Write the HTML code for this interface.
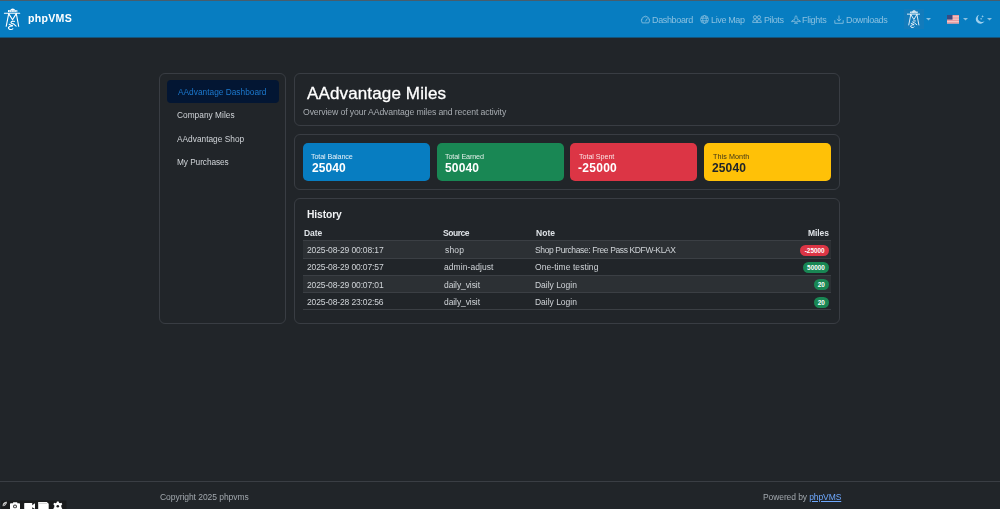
<!DOCTYPE html>
<html><head><meta charset="utf-8">
<style>
*{box-sizing:border-box;margin:0;padding:0}
html,body{width:1000px;height:509px;overflow:hidden;background:#212529;font-family:"Liberation Sans",sans-serif;color:#dee2e6}
.a{position:absolute;white-space:nowrap;line-height:1;will-change:transform}
.abs{position:absolute}
.card{position:absolute;border:1px solid #393d43;border-radius:6px}
.stat{position:absolute;top:143px;height:38px;width:127px;border-radius:5px}
.badge{position:absolute;height:11px;border-radius:6px;font-size:6.4px;font-weight:bold;color:#fff;line-height:11px;text-align:center;font-family:"Liberation Sans",sans-serif}
</style></head>
<body>
<div class="abs" style="left:0;top:0;width:1000px;height:1px;background:#475d6d"></div>
<div class="abs" style="left:0;top:1px;width:1000px;height:37px;background:#077dc1;border-bottom:1px solid #15547a"></div>
<!-- logo -->
<svg class="abs" style="left:0;top:0" width="24" height="34" viewBox="0 0 24 34" fill="none" stroke="#fff" stroke-width="1.1" stroke-linecap="round">
  <path d="M10.2 10.3 Q10.6 8.4 12.7 8.4 Q14.8 8.4 15.2 10.3 Z" fill="#fff" stroke="none"/>
  <rect x="8" y="10.1" width="9.3" height="2" fill="#fff" stroke="none"/>
  <path d="M9.7 10.8 V11.6 M11.4 10.8 V11.6 M13.1 10.8 V11.6 M14.8 10.8 V11.6 M16.4 10.8 V11.6" stroke="#077dc1" stroke-width="0.45"/>
  <path d="M4.4 13.2 H19.7"/>
  <path d="M8.7 13.6 L12.5 19.7 L16.3 13.6"/>
  <path d="M8.7 13.6 L6.2 26.3 M16.3 13.6 L18.7 26.3"/>
  <path d="M14.4 21.4 Q11.5 20.9 10.9 22.4 Q11 23.6 13.4 23.9 L16.1 26.1"/>
  <path d="M9.2 24.3 L12.8 25.9 Q9.6 26 8.5 27.4 Q8.3 29.2 10.3 29.5 Q12.3 29.7 12.8 28.7"/>
</svg>

<!-- nav icons -->
<svg class="abs" style="left:640px;top:15px" width="11" height="9" viewBox="0 0 11 9" fill="none" stroke="#8ac0e0" stroke-width="0.85">
  <path d="M2.2 7.9 A4.1 4.1 0 1 1 8.8 7.9 Z"/>
  <path d="M5.5 6.4 L7.4 3.4"/>
  <path d="M2.4 4.6 L3.1 4.9 M5.5 1.8 V2.5 M8.6 4.6 L7.9 4.9" stroke-width="0.6"/>
</svg>
<svg class="abs" style="left:700px;top:14.5px" width="9" height="9" viewBox="0 0 9 9" fill="none" stroke="#8ac0e0" stroke-width="0.8">
  <circle cx="4.5" cy="4.5" r="3.9"/>
  <ellipse cx="4.5" cy="4.5" rx="1.8" ry="3.9"/>
  <path d="M0.8 3.2 H8.2 M0.8 5.8 H8.2"/>
</svg>
<svg class="abs" style="left:752px;top:15px" width="10" height="8" viewBox="0 0 10 8" fill="none" stroke="#8ac0e0" stroke-width="0.85">
  <circle cx="3" cy="2.3" r="1.6"/><circle cx="7" cy="2.3" r="1.6"/>
  <path d="M0.6 7.4 Q0.6 4.6 3 4.6 Q5 4.6 5 7.4 Z M5 7.4 Q5 4.6 7 4.6 Q9.4 4.6 9.4 7.4 Z"/>
</svg>
<svg class="abs" style="left:791px;top:14.5px" width="10" height="9" viewBox="0 0 10 9" fill="none" stroke="#8ac0e0" stroke-width="0.8">
  <path d="M5 0.6 Q6 1 6 2.5 V4 L9.3 6 V6.8 L6 6 L5.6 7.6 L6.6 8.3 H3.4 L4.4 7.6 L4 6 L0.7 6.8 V6 L4 4 V2.5 Q4 1 5 0.6 Z"/>
</svg>
<svg class="abs" style="left:834px;top:14.5px" width="10" height="9" viewBox="0 0 10 9" fill="none" stroke="#8ac0e0" stroke-width="0.85">
  <path d="M5 0.5 V6 M2.8 4 L5 6.1 L7.2 4"/>
  <path d="M0.8 5.2 V8.3 H9.2 V5.2"/>
</svg>
<!-- right side -->
<div class="abs" style="left:904px;top:9px;width:19.5px;height:19.5px;background:#137bbb"></div>
<svg class="abs" style="left:907px;top:10px" width="13" height="18" viewBox="4 8.2 16.1 21.8" preserveAspectRatio="none" fill="none" stroke="#fff" stroke-width="1.05" stroke-linecap="round">
  <path d="M10.2 10.3 Q10.6 8.4 12.7 8.4 Q14.8 8.4 15.2 10.3 Z" fill="#fff" stroke="none"/>
  <rect x="8" y="10.1" width="9.3" height="2" fill="#fff" stroke="none"/>
  <path d="M9.7 10.8 V11.6 M11.4 10.8 V11.6 M13.1 10.8 V11.6 M14.8 10.8 V11.6 M16.4 10.8 V11.6" stroke="#137bbb" stroke-width="0.45"/>
  <path d="M4.4 13.2 H19.7"/>
  <path d="M8.7 13.6 L12.5 19.7 L16.3 13.6"/>
  <path d="M8.7 13.6 L6.2 26.3 M16.3 13.6 L18.7 26.3"/>
  <path d="M14.4 21.4 Q11.5 20.9 10.9 22.4 Q11 23.6 13.4 23.9 L16.1 26.1"/>
  <path d="M9.2 24.3 L12.8 25.9 Q9.6 26 8.5 27.4 Q8.3 29.2 10.3 29.5 Q12.3 29.7 12.8 28.7"/>
</svg>
<svg class="abs" style="left:925.5px;top:18px" width="5" height="3" viewBox="0 0 5 3"><path d="M0 0 H5 L2.5 2.6 Z" fill="#8ac0e0"/></svg>
<svg class="abs" style="left:947px;top:15px" width="12" height="8.5" viewBox="0 0 12 8.5">
  <rect width="12" height="8.5" fill="#f3c6c6"/>
  <rect y="0" width="12" height="1.2" fill="#e89a9f"/><rect y="2.4" width="12" height="1.2" fill="#e89a9f"/><rect y="4.8" width="12" height="1.2" fill="#e89a9f"/><rect y="7.2" width="12" height="1.3" fill="#e89a9f"/>
  <rect width="5.5" height="4.6" fill="#3a4a80"/>
</svg>
<svg class="abs" style="left:962.5px;top:18px" width="5" height="3" viewBox="0 0 5 3"><path d="M0 0 H5 L2.5 2.6 Z" fill="#8ac0e0"/></svg>
<svg class="abs" style="left:974.5px;top:14px" width="11" height="10" viewBox="0 0 11 10">
  <path d="M4.3 0.7 A4.6 4.6 0 1 0 9.6 7.1 A3.6 3.6 0 0 1 4.3 0.7 Z" fill="#9fd0ee"/>
  <path d="M7.6 0.9 l0.4 1 l1 0.4 l-1 0.4 l-0.4 1 l-0.4 -1 l-1 -0.4 l1 -0.4 Z" fill="#9fd0ee"/>
  <path d="M6.1 3.7 l0.35 0.8 l0.8 0.35 l-0.8 0.35 l-0.35 0.8 l-0.35 -0.8 l-0.8 -0.35 l0.8 -0.35 Z" fill="#9fd0ee"/>
</svg>
<svg class="abs" style="left:986.5px;top:18px" width="5" height="3" viewBox="0 0 5 3"><path d="M0 0 H5 L2.5 2.6 Z" fill="#8ac0e0"/></svg>


<!-- sidebar -->
<div class="card" style="left:159px;top:73px;width:127px;height:251px"></div>
<div class="abs" style="left:166.5px;top:80px;width:112.5px;height:23px;background:#031633;border-radius:4px"></div>
<!-- header card -->
<div class="card" style="left:294px;top:73px;width:546px;height:53px"></div>
<!-- stats card -->
<div class="card" style="left:294px;top:134px;width:546px;height:56px"></div>
<div class="stat" style="left:303px;background:#077dc1"></div>
<div class="stat" style="left:437px;background:#198754"></div>
<div class="stat" style="left:570px;background:#dc3545"></div>
<div class="stat" style="left:704px;background:#ffc107"></div>
<!-- history card -->
<div class="card" style="left:294px;top:198px;width:546px;height:126px"></div>
<div class="abs" style="left:303px;top:240px;width:528px;height:1px;background:#3b3f44"></div>
<div class="abs" style="left:303px;top:241px;width:528px;height:17px;background:#2c3034"></div>
<div class="abs" style="left:303px;top:258px;width:528px;height:1px;background:#3b3f44"></div>
<div class="abs" style="left:303px;top:275px;width:528px;height:1px;background:#3b3f44"></div>
<div class="abs" style="left:303px;top:276px;width:528px;height:16px;background:#2c3034"></div>
<div class="abs" style="left:303px;top:292px;width:528px;height:1px;background:#3b3f44"></div>
<div class="abs" style="left:303px;top:309px;width:528px;height:1px;background:#3b3f44"></div>
<div class="badge" style="left:800.3px;top:244.8px;width:28.8px;background:#dc3545">-25000</div>
<div class="badge" style="left:802.9px;top:262px;width:26.2px;background:#198754">50000</div>
<div class="badge" style="left:813.5px;top:279.2px;width:15.6px;background:#198754">20</div>
<div class="badge" style="left:813.5px;top:296.7px;width:15.6px;background:#198754">20</div>
<!-- footer -->
<div class="abs" style="left:0;top:481px;width:1000px;height:1px;background:#3a3e44"></div>
<!-- tray -->
<svg class="abs" style="left:0;top:496px" width="70" height="13" viewBox="0 496 70 13">
  <rect x="1.3" y="500.6" width="65.1" height="9" fill="#1a1b1c"/>
  <path d="M2.6 506.3 Q2.4 503 5 502 Q6.6 501.4 7 501.8 Q7.2 503.6 5.4 505.2 Q4 506.4 2.6 506.3 Z" fill="#c8c8c8"/>
  <path d="M3.4 505.4 L5.6 503.6" stroke="#1a1b1c" stroke-width="0.5"/>
  <rect x="10" y="503.3" width="10" height="6" rx="0.8" fill="#fff"/>
  <rect x="13" y="502.3" width="4.4" height="1.6" rx="0.4" fill="#fff"/>
  <circle cx="15" cy="506.4" r="1.9" fill="#333"/>
  <circle cx="15" cy="506.4" r="1.0" fill="#fff"/>
  <rect x="24.2" y="503" width="8" height="6" rx="0.6" fill="#fff"/>
  <path d="M31.8 505.4 L35 503.2 V509 L31.8 507 Z" fill="#fff"/>
  <path d="M38.2 502 H46.8 L48.7 503.8 V509 H38.2 Z" fill="#fff"/>
  <path d="M39 502.8 H46.4 L47.6 504 H39 Z" fill="#d8d8d8"/>
  <g transform="translate(57.8 506.3)">
    <path d="M-0.9 -4.9 H0.9 L1.2 -3.6 L2.3 -3 L3.6 -3.6 L4.5 -2.1 L3.5 -1.1 V0.9 L4.5 1.9 L3.6 3.4 L2.3 2.9 L1.2 3.6 L0.9 4.9 H-0.9 L-1.2 3.6 L-2.3 2.9 L-3.6 3.4 L-4.5 1.9 L-3.5 0.9 V-1.1 L-4.5 -2.1 L-3.6 -3.6 L-2.3 -3 L-1.2 -3.6 Z" fill="#fff"/>
    <circle cx="0" cy="0" r="1.3" fill="#1a1b1c"/>
  </g>
</svg>

<div class="a" style="left:27.62px;top:13.01px;font-size:10.6px;letter-spacing:0.286px;color:#ffffff;font-weight:700;">phpVMS</div>
<div class="a" style="left:651.60px;top:16.00px;font-size:9px;letter-spacing:-0.356px;color:#8ac0e0;">Dashboard</div>
<div class="a" style="left:710.60px;top:16.00px;font-size:9px;letter-spacing:-0.367px;color:#8ac0e0;">Live Map</div>
<div class="a" style="left:763.60px;top:16.00px;font-size:9px;letter-spacing:-0.413px;color:#8ac0e0;">Pilots</div>
<div class="a" style="left:801.71px;top:16.00px;font-size:9px;letter-spacing:-0.298px;color:#8ac0e0;">Flights</div>
<div class="a" style="left:845.60px;top:16.00px;font-size:9px;letter-spacing:-0.349px;color:#8ac0e0;">Downloads</div>
<div class="a" style="left:177.67px;top:88.01px;font-size:8.3px;letter-spacing:0.019px;color:#1c78cd;">AAdvantage Dashboard</div>
<div class="a" style="left:177.33px;top:111.01px;font-size:8.3px;letter-spacing:0.034px;color:#d0d4d8;">Company Miles</div>
<div class="a" style="left:177.45px;top:134.51px;font-size:8.3px;letter-spacing:0.017px;color:#d0d4d8;">AAdvantage Shop</div>
<div class="a" style="left:177.26px;top:157.51px;font-size:8.3px;letter-spacing:-0.075px;color:#d0d4d8;">My Purchases</div>
<div class="a" style="left:307.10px;top:84.51px;font-size:17.0px;letter-spacing:0.138px;color:#ffffff;-webkit-text-stroke:0.3px #fff;">AAdvantage Miles</div>
<div class="a" style="left:302.52px;top:108.00px;font-size:8.7px;letter-spacing:-0.122px;color:#a7acb1;">Overview of your AAdvantage miles and recent activity</div>
<div class="a" style="left:311.19px;top:153.00px;font-size:7.2px;letter-spacing:-0.118px;color:#e6f1f8;">Total Balance</div>
<div class="a" style="left:444.81px;top:153.00px;font-size:7.2px;letter-spacing:-0.130px;color:#e3efe9;">Total Earned</div>
<div class="a" style="left:578.50px;top:153.00px;font-size:7.2px;letter-spacing:-0.059px;color:#f9e3e5;">Total Spent</div>
<div class="a" style="left:712.52px;top:153.00px;font-size:7.2px;letter-spacing:0.074px;color:#3d3418;">This Month</div>
<div class="a" style="left:311.57px;top:162.01px;font-size:12.0px;letter-spacing:0.105px;color:#ffffff;font-weight:700;">25040</div>
<div class="a" style="left:444.59px;top:162.01px;font-size:12.0px;letter-spacing:0.168px;color:#ffffff;font-weight:700;">50040</div>
<div class="a" style="left:578.42px;top:162.01px;font-size:12.0px;letter-spacing:0.279px;color:#ffffff;font-weight:700;">-25000</div>
<div class="a" style="left:712.28px;top:162.01px;font-size:12.0px;letter-spacing:0.122px;color:#212529;font-weight:700;">25040</div>
<div class="a" style="left:306.82px;top:209.51px;font-size:10.3px;letter-spacing:-0.118px;color:#f0f2f4;font-weight:700;">History</div>
<div class="a" style="left:304.32px;top:229.00px;font-size:8.5px;letter-spacing:-0.036px;color:#dee2e6;font-weight:700;">Date</div>
<div class="a" style="left:442.58px;top:229.00px;font-size:8.5px;letter-spacing:-0.452px;color:#dee2e6;font-weight:700;">Source</div>
<div class="a" style="left:535.52px;top:229.00px;font-size:8.5px;letter-spacing:0.049px;color:#dee2e6;font-weight:700;">Note</div>
<div class="a" style="left:808.32px;top:229.00px;font-size:8.5px;letter-spacing:-0.098px;color:#dee2e6;font-weight:700;">Miles</div>
<div class="a" style="left:306.81px;top:246.00px;font-size:8.5px;letter-spacing:-0.129px;color:#d0d4d8;">2025-08-29 00:08:17</div>
<div class="a" style="left:306.81px;top:263.41px;font-size:8.5px;letter-spacing:-0.129px;color:#d0d4d8;">2025-08-29 00:07:57</div>
<div class="a" style="left:306.81px;top:281.00px;font-size:8.5px;letter-spacing:-0.128px;color:#d0d4d8;">2025-08-29 00:07:01</div>
<div class="a" style="left:306.81px;top:298.00px;font-size:8.5px;letter-spacing:-0.132px;color:#d0d4d8;">2025-08-28 23:02:56</div>
<div class="a" style="left:444.64px;top:246.00px;font-size:8.5px;letter-spacing:0.143px;color:#d0d4d8;">shop</div>
<div class="a" style="left:444.29px;top:263.41px;font-size:8.5px;letter-spacing:0.070px;color:#d0d4d8;">admin-adjust</div>
<div class="a" style="left:444.43px;top:281.00px;font-size:8.5px;letter-spacing:-0.085px;color:#d0d4d8;">daily_visit</div>
<div class="a" style="left:444.43px;top:298.00px;font-size:8.5px;letter-spacing:-0.085px;color:#d0d4d8;">daily_visit</div>
<div class="a" style="left:535.18px;top:246.00px;font-size:8.5px;letter-spacing:-0.376px;color:#d0d4d8;">Shop Purchase: Free Pass KDFW-KLAX</div>
<div class="a" style="left:535.35px;top:263.41px;font-size:8.5px;letter-spacing:0.067px;color:#d0d4d8;">One-time testing</div>
<div class="a" style="left:535.26px;top:281.00px;font-size:8.5px;letter-spacing:-0.017px;color:#d0d4d8;">Daily Login</div>
<div class="a" style="left:535.26px;top:298.00px;font-size:8.5px;letter-spacing:-0.017px;color:#d0d4d8;">Daily Login</div>
<div class="a" style="left:159.50px;top:492.50px;font-size:8.5px;letter-spacing:-0.052px;color:#a2a8ae;">Copyright 2025 phpvms</div>
<div class="a" style="left:762.67px;top:492.50px;font-size:8.5px;letter-spacing:-0.096px;color:#a2a8ae;">Powered by <span style="color:#6ea8fe;text-decoration:underline">phpVMS</span></div>
</body></html>
